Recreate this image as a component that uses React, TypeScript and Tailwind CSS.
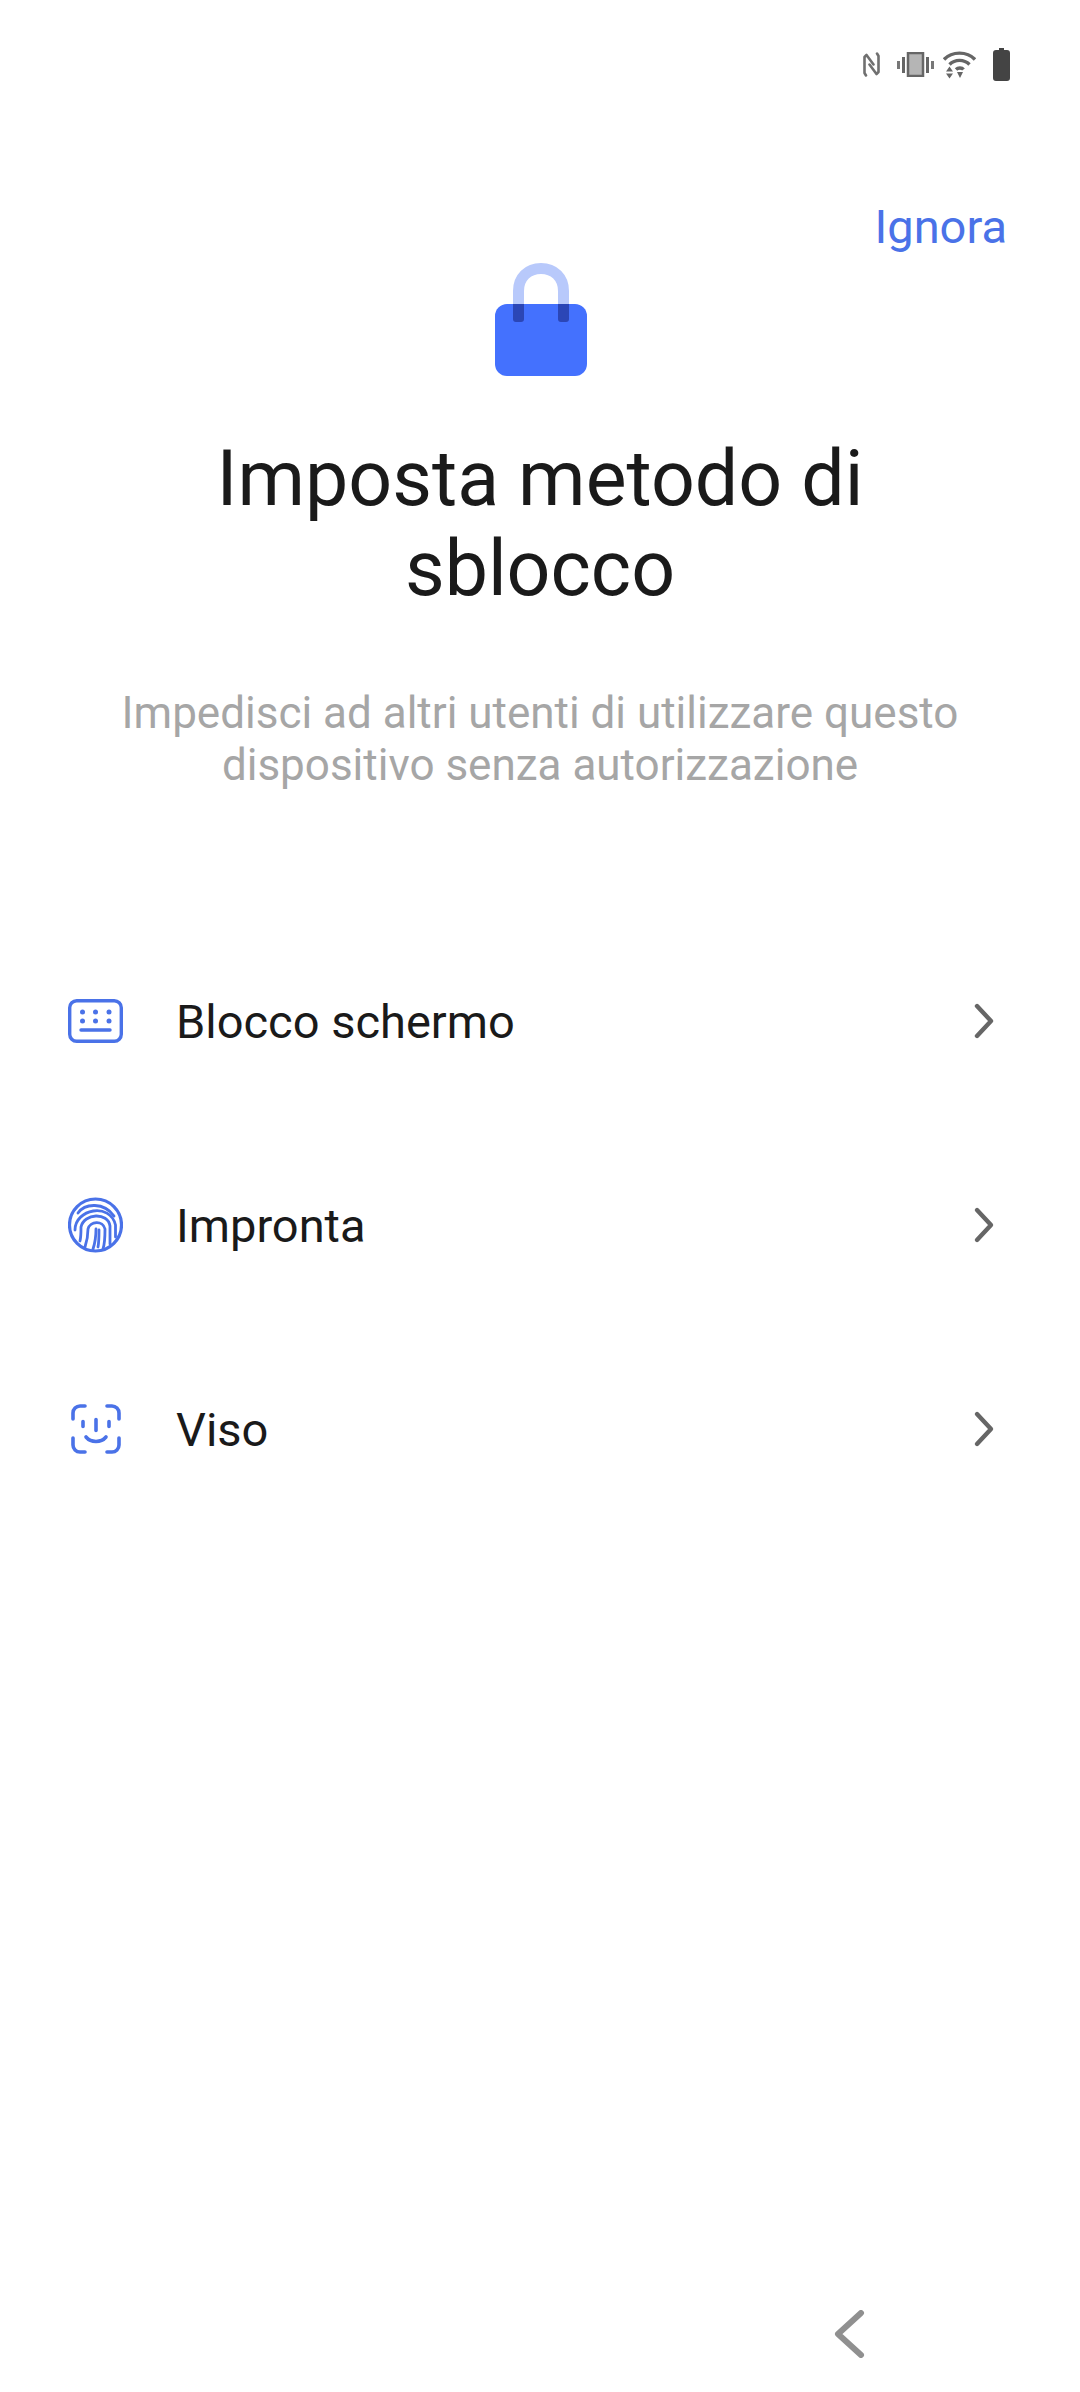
const rows = [
  { label: "Blocco schermo", icon: <KeyboardIcon /> },
  { label: "Impronta", icon: <FingerprintIcon /> },
  { label: "Viso", icon: <FaceIcon /> },
];

function StatusIcons() {
  return (
    <div className="flex h-[33px] items-center justify-end pr-[70px]">
      <svg width="17" height="25" viewBox="0 0 17 25" fill="none" stroke="#707070" strokeWidth="2.600" strokeLinecap="round" strokeLinejoin="round" className="mr-[17px]">
        <path d="M3 23.500 1.500 21V5L3.500 3l7 9.500" />
        <path d="M14 1.500 15.500 4v16l-2 2-7-9.500" />
      </svg>
      <svg width="37" height="25" viewBox="0 0 37 25" className="mr-[9px]">
        <rect x="0" y="9" width="3" height="8" fill="#777" />
        <rect x="34" y="9" width="3" height="8" fill="#777" />
        <rect x="5" y="5" width="3" height="16" fill="#666" />
        <rect x="29" y="5" width="3" height="16" fill="#666" />
        <rect x="11" y="1" width="15" height="23" fill="#b5b5b5" stroke="#666" strokeWidth="2.500" />
      </svg>
      <svg width="33" height="28" viewBox="0 0 33 28" className="mr-[17px]" fill="none" stroke="#666" strokeWidth="3.400">
        <path d="M1 8.500C9 0 24 0 32 8.500" />
        <path d="M6.500 13.500C12 8 21 8 26.500 13.500" />
        <path d="M13 18.500C15 16.500 19 16.500 20.500 18.500" />
        <path d="M3 20.500h7L6.500 15.500zM3 22.500h7L6.500 27.500zM14 21h6l-3 6z" fill="#666" stroke="none" />
      </svg>
      <svg width="17" height="33" viewBox="0 0 17 33">
        <path d="M6 0h5v2h3a3 3 0 0 1 3 3v25a3 3 0 0 1-3 3H3a3 3 0 0 1-3-3V5a3 3 0 0 1 3-3h3z" fill="#444" />
      </svg>
    </div>
  );
}

function LockIcon() {
  return (
    <svg width="92" height="113" viewBox="0 0 92 113" className="mx-auto translate-x-px">
      <path d="M23.500 42V28C23.500 14.500 33 5.500 46 5.500S68.500 14.500 68.500 28v14" fill="none" stroke="#b8c9fb" strokeWidth="11" />
      <rect x="0" y="41" width="92" height="72" rx="12" fill="#4471fe" />
      <path d="M18 41h11v15a3 3 0 0 1-3 3h-5a3 3 0 0 1-3-3zM63 41h11v15a3 3 0 0 1-3 3h-5a3 3 0 0 1-3-3z" fill="#2b46b6" />
    </svg>
  );
}

function KeyboardIcon() {
  return (
    <svg width="55" height="44" viewBox="0 0 55 44" fill="none" stroke="#4a72e8" strokeWidth="3.400">
      <rect x="1.700" y="1.700" width="51.600" height="40.600" rx="7" />
      <g fill="#4a72e8" stroke="none">
        <circle cx="14.500" cy="13" r="2.500" />
        <circle cx="27.500" cy="13" r="2.500" />
        <circle cx="41" cy="13" r="2.500" />
        <circle cx="14.500" cy="22" r="2.500" />
        <circle cx="27.500" cy="22" r="2.500" />
        <circle cx="41" cy="22" r="2.500" />
      </g>
      <path d="M13 31h29" strokeLinecap="round" />
    </svg>
  );
}

function FingerprintIcon() {
  return (
    <svg width="55" height="56" viewBox="0 0 55 56" fill="none" stroke="#4a72e8" strokeWidth="2.800" strokeLinecap="round">
      <circle cx="27.500" cy="28" r="26" strokeWidth="3.200" />
      <path d="M10 16C17 6 36 5 46 19" />
      <path d="M7 33C7 12 42 5 47.500 28v12" />
      <path d="M12 44c1-4 1-9 1-14 3-14 27-15 29-1v18" />
      <path d="M17 50c2-6 3-12 3-18 2-8 15-9 17 0 0 7 0 14-2 20" />
      <path d="M25 52c2-6 3-13 3-20" />
      <path d="M31 33c0 6 0 12-1 17" />
    </svg>
  );
}

function FaceIcon() {
  return (
    <svg width="50" height="50" viewBox="0 0 50 50" fill="none" stroke="#4a72e8" strokeWidth="3.600" strokeLinecap="round">
      <path d="M14 2H9a7 7 0 0 0-7 7v6M36 2h5a7 7 0 0 1 7 7v6M2 34v7a7 7 0 0 0 7 7h5M48 34v7a7 7 0 0 1-7 7h-5" />
      <path d="M12 17.500v5M25 15.500v11M38 17.500v5" />
      <path d="M15 33c5 6 15 6 20 0" />
    </svg>
  );
}

function RowChevron() {
  return (
    <svg width="24" height="40" viewBox="0 0 24 40" fill="none" stroke="#666" strokeWidth="4.400" strokeLinecap="round" strokeLinejoin="round">
      <path d="M5 5l14 15L5 35" />
    </svg>
  );
}

function App() {
  return (
    <div className="flex h-[2392px] w-[1080px] flex-col bg-white font-['Roboto',sans-serif]">
      <div className="pt-[48px]">
        <StatusIcons />
      </div>

      <div className="mt-[112px] flex h-[70px] justify-end pr-[73px] text-[47px] leading-[68px] text-[#4a72e8]">
        Ignora
      </div>

      <LockIcon />

      <h1 className="mx-auto mt-[58px] w-[800px] text-center text-[77px] leading-[90px] font-normal text-[#1a1a1a]">
        Imposta metodo di sblocco
      </h1>

      <p className="mx-auto mt-[73px] w-[900px] text-center text-[44px] leading-[52px] text-[#a6a6a6]">
        Impedisci ad altri utenti di utilizzare questo dispositivo senza autorizzazione
      </p>

      <ul className="mt-[128px] flex flex-col">
        {rows.map((row, i) => (
          <li key={row.label} className="flex h-[204px] items-center pr-[84px] pl-[68px]">
            <div className={i === 2 ? "flex w-[108px] shrink-0 items-center pl-[3px]" : "flex w-[108px] shrink-0 items-center"}>
              {row.icon}
            </div>
            <span className="flex-1 pt-[2px] text-[47px] text-[#1a1a1a]">{row.label}</span>
            <RowChevron />
          </li>
        ))}
      </ul>

      <div className="mt-auto flex pb-[34px] pl-[832px]">
        <svg width="36" height="48" viewBox="0 0 36 48" fill="none" stroke="#909090" strokeWidth="6" strokeLinecap="round" strokeLinejoin="round">
          <path d="M29 3 6 24l23 21" />
        </svg>
      </div>
    </div>
  );
}

export default App;
